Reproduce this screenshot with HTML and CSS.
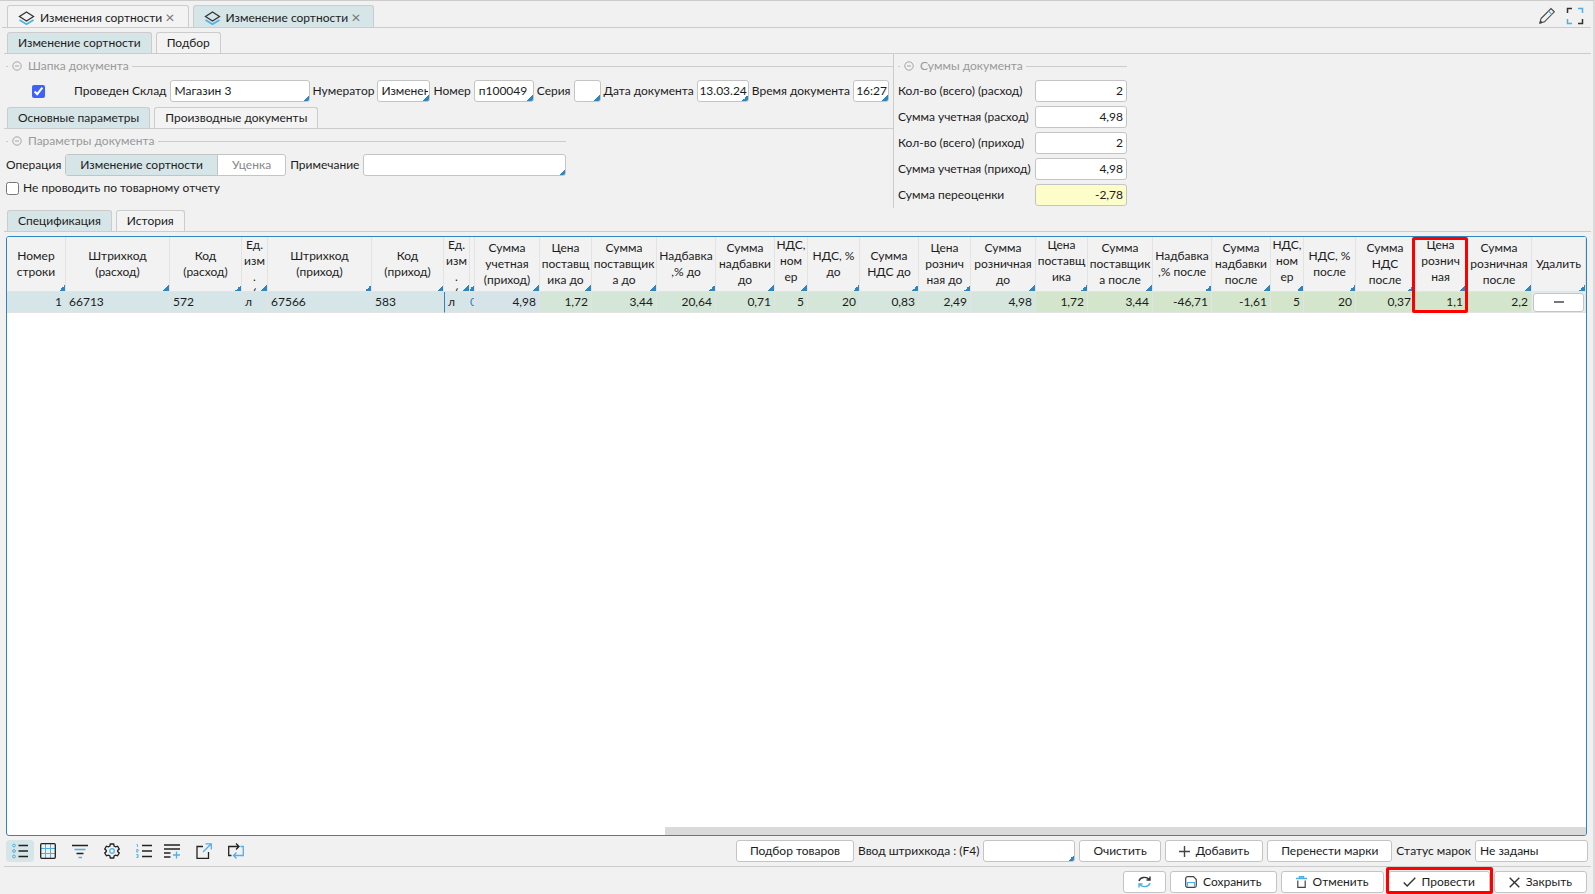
FILE: index.html
```html
<!DOCTYPE html>
<html lang="ru">
<head>
<meta charset="utf-8">
<title>Изменение сортности</title>
<link rel="stylesheet" href="styles.css">
</head>
<body>
<svg class="defs" aria-hidden="true">
  <symbol id="layers" viewBox="0 0 16 14"><path d="M8 1 15 5.500 8 10 1 5.500Z" fill="none" stroke="#333" stroke-width="1.300"/><path d="M1 9l7 4.300L15 9" fill="none" stroke="#4fb0e6" stroke-width="1.600"/></symbol>
  <symbol id="fold" viewBox="0 0 10 10"><circle cx="5" cy="5" r="4.200" fill="none" stroke="#a5a5a5"/><path d="M3 5h4" stroke="#a5a5a5"/></symbol>
</svg>
<div class="app">
  <header class="topbar">
    <div class="tabs" role="tablist">
      <div class="tab doc"><svg><use href="#layers"/></svg><button class="plain" role="tab">Изменения сортности</button><button class="close" aria-label="Закрыть вкладку">×</button></div>
      <div class="tab doc active"><svg><use href="#layers"/></svg><button class="plain" role="tab" aria-selected="true">Изменение сортности</button><button class="close" aria-label="Закрыть вкладку">×</button></div>
    </div>
    <div class="window-tools">
      <button class="icon" aria-label="Редактировать"><svg width="18" height="18" viewBox="0 0 18 18" fill="none" stroke="#444" stroke-width="1.100"><path d="M2 16l1-4.500L13 1.500l3.300 3.300L6.500 14.800Z"/><path d="M10.500 4l3.300 3.300" stroke="#4fb0e6"/><path d="M2 16l.5-2 1.500 1.500Z" fill="#333"/></svg></button>
      <button class="icon" aria-label="Во весь экран"><svg width="18" height="18" viewBox="0 0 18 18" fill="none" stroke="#333" stroke-width="1.500"><path d="M1.500 6V1.500H6M16.500 12v4.500H12"/><path d="M12 1.500h4.500V6M6 16.500H1.500V12" stroke="#4fb0e6"/></svg></button>
    </div>
  </header>

  <main class="form">
    <nav class="tabs sub" role="tablist">
      <button class="tab active" role="tab" aria-selected="true">Изменение сортности</button>
      <button class="tab" role="tab">Подбор</button>
    </nav>

    <div class="panels">
      <div class="left">
        <section class="group">
          <h2><svg><use href="#fold"/></svg>Шапка документа</h2>
          <div class="header-fields">
            <input type="checkbox" id="posted" checked><label for="posted">Проведен</label>
            <label for="store">Склад</label><input class="pick" id="store" value="Магазин 3">
            <label for="numr">Нумератор</label><input class="pick tight" id="numr" value="Изменение сортности">
            <label for="num">Номер</label><input class="pick" id="num" value="п100049">
            <label for="ser">Серия</label><input class="pick" id="ser">
            <label for="date">Дата документа</label><input class="pick date" id="date" value="13.03.24">
            <label for="time">Время документа</label><input class="pick date" id="time" value="16:27">
          </div>
        </section>
        <nav class="tabs inner" role="tablist">
          <button class="tab active" role="tab" aria-selected="true">Основные параметры</button>
          <button class="tab" role="tab">Производные документы</button>
        </nav>
        <section class="group params">
          <h2><svg><use href="#fold"/></svg>Параметры документа</h2>
          <div class="line">
            <span>Операция</span>
            <div class="toggle"><button class="on" aria-pressed="true">Изменение сортности</button><button>Уценка</button></div>
            <label for="note">Примечание</label><input class="pick note" id="note">
          </div>
          <div class="line check"><input type="checkbox" id="skip"><label for="skip">Не проводить по товарному отчету</label></div>
        </section>
      </div>
      <section class="group sums">
        <h2><svg><use href="#fold"/></svg>Суммы документа</h2>
        <div class="sum-grid">
          <label for="s1">Кол-во (всего) (расход)</label><input id="s1" value="2">
          <label for="s2">Сумма учетная (расход)</label><input id="s2" value="4,98">
          <label for="s3">Кол-во (всего) (приход)</label><input id="s3" value="2">
          <label for="s4">Сумма учетная (приход)</label><input id="s4" value="4,98">
          <label for="s5">Сумма переоценки</label><input id="s5" class="warn" value="-2,78">
        </div>
      </section>
    </div>

    <nav class="tabs spec" role="tablist">
      <button class="tab active" role="tab" aria-selected="true">Спецификация</button>
      <button class="tab" role="tab">История</button>
    </nav>

    <div class="grid">
      <table>
        <colgroup><col class="w59"><col class="w104"><col class="w72"><col class="w26"><col class="w104"><col class="w72"><col class="w26"><col class="w5"><col class="w65"><col class="w52"><col class="w65"><col class="w59"><col class="w59"><col class="w33"><col class="w52"><col class="w59"><col class="w52"><col class="w65"><col class="w52"><col class="w65"><col class="w59"><col class="w59"><col class="w33"><col class="w52"><col class="w59"><col class="w52"><col class="w65"><col></colgroup>
        <thead><tr>
          <th><div>Номер<br>строки</div></th>
          <th><div>Штрихкод<br>(расход)</div></th>
          <th><div>Код<br>(расход)</div></th>
          <th class="top"><div>Ед.<br>изм<br>.<br>(</div></th>
          <th><div>Штрихкод<br>(приход)</div></th>
          <th><div>Код<br>(приход)</div></th>
          <th class="top"><div>Ед.<br>изм<br>.<br>(</div></th>
          <th></th>
          <th><div>Сумма<br>учетная<br>(приход)</div></th>
          <th><div>Цена<br>поставщ<br>ика до</div></th>
          <th><div>Сумма<br>поставщик<br>а до</div></th>
          <th><div>Надбавка<br>,% до</div></th>
          <th><div>Сумма<br>надбавки<br>до</div></th>
          <th class="top"><div>НДС,<br>ном<br>ер</div></th>
          <th><div>НДС, %<br>до</div></th>
          <th><div>Сумма<br>НДС до</div></th>
          <th><div>Цена<br>рознич<br>ная до</div></th>
          <th><div>Сумма<br>розничная<br>до</div></th>
          <th class="top"><div>Цена<br>поставщ<br>ика</div></th>
          <th><div>Сумма<br>поставщик<br>а после</div></th>
          <th><div>Надбавка<br>,% после</div></th>
          <th><div>Сумма<br>надбавки<br>после</div></th>
          <th class="top"><div>НДС,<br>ном<br>ер</div></th>
          <th><div>НДС, %<br>после</div></th>
          <th><div>Сумма<br>НДС<br>после</div></th>
          <th class="top marked"><div>Цена<br>рознич<br>ная</div></th>
          <th><div>Сумма<br>розничная<br>после</div></th>
          <th><div>Удалить</div></th>
        </tr></thead>
        <tbody><tr>
          <td class="num">1</td><td>66713</td><td>572</td><td>л</td><td>67566</td><td>583</td><td class="current">л</td><td class="sliver">0</td>
          <td class="num sky">4,98</td>
          <td class="num before">1,72</td><td class="num before">3,44</td><td class="num before">20,64</td><td class="num before">0,71</td><td class="num before">5</td><td class="num before">20</td>
          <td class="num retail">0,83</td><td class="num retail">2,49</td><td class="num retail">4,98</td>
          <td class="num after">1,72</td><td class="num after">3,44</td><td class="num after">-46,71</td><td class="num after">-1,61</td><td class="num after">5</td><td class="num after">20</td><td class="num after">0,37</td><td class="num after">1,1</td><td class="num after">2,2</td>
          <td class="del"><button aria-label="Удалить строку"><svg width="10" height="2"><path d="M0 1h10" stroke="#777" stroke-width="2"/></svg></button></td>
        </tr></tbody>
      </table>
      <div class="scroll"></div>
    </div>

    <div class="toolbar">
      <div class="tools">
        <button class="icon active" aria-label="Список"><svg viewBox="0 0 16 16"><g stroke="#4fb0e6"><circle cx="2" cy="2.500" r="1.400"/><circle cx="2" cy="8" r="1.400"/><circle cx="2" cy="13.500" r="1.400"/></g><path d="M6.500 2.500H16M6.500 8H16M6.500 13.500H16" stroke-width="1.500"/></svg></button>
        <button class="icon" aria-label="Таблица"><svg viewBox="0 0 16 16"><path d="M5.500 1v14M10.500 1v14M1 5.500h14M1 10.500h14" stroke="#4fb0e6"/><rect x=".7" y=".7" width="14.600" height="14.600" rx="1" stroke-width="1.300"/></svg></button>
        <button class="icon gap" aria-label="Фильтр"><svg viewBox="0 0 16 16"><path d="M0 2.500h16M4.500 10.500h7" stroke-width="1.400"/><path d="M2.500 6.500h11M6.500 14.500h3.500" stroke="#4fb0e6" stroke-width="1.400"/></svg></button>
        <button class="icon gap" aria-label="Настройки"><svg viewBox="0 0 16 16"><path d="M6.300 1h3.400l.4 2 1.500.9 2-.7 1.700 2.900-1.600 1.300v1.200l1.600 1.300-1.700 2.900-2-.7-1.500.9-.4 2H6.300l-.4-2-1.500-.9-2 .7L.7 9.900l1.600-1.300V7.400L.7 6.100l1.700-2.900 2 .7L5.900 3Z" stroke-width="1.300"/><circle cx="8" cy="8" r="2.300" stroke="#4fb0e6" stroke-width="1.300"/></svg></button>
        <button class="icon gap" aria-label="Нумерация"><svg viewBox="0 0 16 16"><path d="M.5 1.500h1V4M.3 6.500h1.800v1.300H.5v1.200h1.800M.3 11.500h1.800v3H.3M.8 13h1.300" stroke="#4fb0e6" stroke-width=".9"/><path d="M6 2.500h10M6 8h10M6 13.500h10" stroke-width="1.400"/></svg></button>
        <button class="icon" aria-label="Добавить строки"><svg viewBox="0 0 16 16"><path d="M0 2h16M0 6h16M0 10h6.500M0 14h6.500" stroke-width="1.400"/><path d="M9 12h7M12.500 8.500v7" stroke="#4fb0e6" stroke-width="1.300"/></svg></button>
        <button class="icon gap" aria-label="Открыть"><svg viewBox="0 0 16 16"><path d="M7 3.500H1V15.300h11.500V9" stroke-width="1.300"/><path d="M7 9l8-8M9.500.8H15.300V6.500" stroke="#4fb0e6" stroke-width="1.300"/></svg></button>
        <button class="icon gap" aria-label="Обменять"><svg viewBox="0 0 16 16"><path d="M3.500 12.500H.7V3.500h10M8 .5l3 3-3 3" stroke-width="1.300"/><path d="M12.500 3.500h2.800v9H6M8.500 9.500l-3 3 3 3" stroke="#4fb0e6" stroke-width="1.300"/></svg></button>
      </div>
      <div class="actions">
        <button class="btn">Подбор товаров</button>
        <label for="bar">Ввод штрихкода : (F4)</label><input class="pick bar" id="bar">
        <button class="btn">Очистить</button>
        <button class="btn"><svg width="11" height="11" viewBox="0 0 11 11"><path d="M0 5.500h11M5.500 0v11" stroke="#444" stroke-width="1.400"/></svg>Добавить</button>
        <button class="btn">Перенести марки</button>
        <label for="mark">Статус марок</label><input class="mark" id="mark" value="Не заданы">
      </div>
    </div>

    <footer class="footer">
      <button class="btn" aria-label="Обновить"><svg width="13" height="12" viewBox="0 0 13 12" fill="none" stroke-width="1.400"><path d="M1 5C2 1 8 0 11.500 3.500M12 .5v3.500H8.500" stroke="#333"/><path d="M12 7c-1 4-7 5-10.500 1.500M1 11.500V8h3.500" stroke="#4fb0e6"/></svg></button>
      <button class="btn"><svg width="12" height="12" viewBox="0 0 12 12" fill="none" stroke="#444" stroke-width="1.200"><path d="M3 .7H8.500l2.800 2.800V9.500q0 1.800-1.800 1.800h-7Q.7 11.300.7 9.500v-7Q.7.700 3 .7Z"/><path d="M2.500 11V6.500h7V11" stroke="#4fb0e6"/></svg>Сохранить</button>
      <button class="btn"><svg width="11" height="12" viewBox="0 0 11 12" fill="none" stroke-width="1.200"><path d="M0 2.500h11M3.500 2.300V.7h4v1.600" stroke="#4fb0e6" stroke-width="1.400"/><path d="M1.800 4.500v6.800h7.400V4.500" stroke="#444"/></svg>Отменить</button>
      <button class="btn marked"><svg width="13" height="10" viewBox="0 0 13 10" fill="none" stroke="#333" stroke-width="1.400"><path d="M.7 5.500 4.200 9 12.300.8"/></svg>Провести</button>
      <button class="btn"><svg width="11" height="11" viewBox="0 0 11 11" stroke="#333" stroke-width="1.400"><path d="M.7.7l9.600 9.600M10.300.7.700 10.300"/></svg>Закрыть</button>
    </footer>
  </main>
</div>
</body>
</html>
```
FILE: styles.css
```css
*, *::before, *::after { box-sizing: border-box; }
body { margin: 0; background: #f1f1f1; color: #1c1c1c; font: 12px/16px Lato, "Noto Sans", sans-serif; }
button, input { font: inherit; color: inherit; margin: 0; }
button { white-space: nowrap; }
label, span { white-space: nowrap; }
.defs { display: none; }
.app { height: 100vh; overflow: hidden; display: flex; flex-direction: column; border-top: 1px solid #ccc; border-right: 2px solid #dadada; }

.topbar { display: flex; justify-content: space-between; margin: 0 2px; padding: 4px 7px 0 5px; border-bottom: 1px solid #ccc; }
.window-tools { display: flex; gap: 10px; align-items: center; }
.icon { display: flex; align-items: center; justify-content: center; padding: 0; border: 0; background: none; border-radius: 4px; }

.tabs { display: flex; gap: 4px; }
.tab { display: flex; align-items: center; height: 21px; padding: 0 10px; border: 1px solid #ccc; border-bottom: 0; border-radius: 3px 3px 0 0; background: #f3f3f3; }
.tab.active { background: #d6e5e8; }
.tab.doc { height: 22px; padding: 2px 13px 0 10px; }
.tab svg { width: 17px; height: 14px; margin-right: 5px; }
.plain, .close { padding: 0; border: 0; background: none; }
.close { margin-left: 3px; padding-bottom: 2px; color: #777; font-size: 16px; line-height: 14px; }

.form { flex: 1; min-height: 0; display: flex; flex-direction: column; padding: 4px 2px 0 4px; }
.sub, .inner, .spec { padding-left: 3px; border-bottom: 1px solid #ccc; }

.panels { display: flex; }
.left { width: 890px; border-right: 1px solid #ccc; padding-left: 2px; }
.group { padding-top: 4px; }
.group h2 { display: flex; align-items: center; margin: 0; height: 16px; font-size: 12px; font-weight: 400; color: #999; }
.group h2::before { content: ""; width: 2px; height: 1px; margin-right: 4px; background: #ccc; }
.group h2::after { content: ""; flex: 1; height: 1px; margin-left: 3px; background: #ccc; }
.group h2 svg { width: 10px; height: 10px; margin-right: 6px; }

input { height: 22px; min-width: 0; padding: 0 4px 1px; border: 1px solid #c4c4c4; border-radius: 3px; background: #fff; }
.pick { background: linear-gradient(135deg, transparent 50%, #2e86c0 50%) no-repeat right bottom / 6px 6px #fff; }
input[type="checkbox"] { width: 13px; height: 13px; accent-color: #3b63fb; }

.header-fields { display: grid; grid-template-columns: 65px auto auto 1fr auto 53px auto 60px auto 27px auto 52px auto 36px; gap: 3px; align-items: center; height: 34px; padding-right: 4px; }
.header-fields input[type="checkbox"] { justify-self: center; }
.date { padding: 0 1px 1px; text-align: right; }
.tight { padding: 0 1px 1px 3px; }
.inner { margin-left: -2px; margin-top: -2px; padding-top: 1px; }
.params { width: 560px; }
.line { display: flex; align-items: center; gap: 4px; margin-top: 5px; }
.check { margin-top: 4px; }
.note { flex: 1; }
.toggle { display: flex; border: 1px solid #c4c4c4; border-radius: 3px; background: #fff; overflow: hidden; }
.toggle button { height: 20px; padding: 0 14px; border: 0; background: none; color: #888; }
.toggle .on { background: #d6e5e8; color: inherit; border-right: 1px solid #c4c4c4; }

.sums { width: 233px; padding-left: 4px; }
.sum-grid { display: grid; grid-template-columns: 1fr 92px; gap: 4px; align-items: center; padding: 6px 0 2px; }
.sum-grid input { text-align: right; padding: 0 3px 1px; }
.sum-grid .warn { background: #fdfdca; }
.spec { padding-top: 2px; }

.grid { position: relative; flex: 1; min-height: 0; margin: 4px 4px 0 2px; border: 1px solid #2e86c0; border-radius: 3px; background: #fff; overflow: hidden; }
table { width: 100%; table-layout: fixed; border-collapse: separate; border-spacing: 0; }
.w5 { width: 5px; } .w26 { width: 26px; } .w33 { width: 33px; } .w52 { width: 52px; } .w59 { width: 59px; } .w65 { width: 65px; } .w72 { width: 72px; } .w104 { width: 104px; }
th, td { padding: 0; border-right: 1px solid #e3e3e3; border-bottom: 1px solid #e3e3e3; white-space: nowrap; }
th { position: relative; height: 55px; font-weight: 400; background: linear-gradient(135deg, transparent 50%, #2e86c0 50%) no-repeat right bottom / 6px 6px #f2f2f2; }
th div { max-height: 54px; overflow: hidden; margin: 0 -2px; }
th.top { vertical-align: top; }
td { height: 21px; padding-left: 3px; background: #d6e5e8; overflow: hidden; }
.num { padding: 0 3px 0 0; text-align: right; }
.sky { background: #d6e4ea; }
.before { background: #d4e6d8; }
.retail { background: #d4e6dd; }
.after { background: #d3e6cc; }
.current { border-left: 1px solid #2e86c0; }
.sliver { padding: 0; color: #2e86c0; }
.del { padding: 0 1px; background: #e3edef; }
.del button { display: flex; align-items: center; justify-content: center; width: 100%; height: 19px; border: 1px solid #c4c4c4; border-radius: 3px; background: #fff; }
th.marked { z-index: 1; }
th.marked::after { content: ""; position: absolute; left: -3px; right: -2px; top: 0; height: 76px; border: 3px solid #f00; border-radius: 2px; }
.scroll { position: absolute; right: 0; bottom: 0; width: 58.300%; height: 8px; background: #dadada; }

.toolbar { display: flex; justify-content: space-between; align-items: center; height: 31px; padding: 0 3px 0 2px; border-bottom: 1px solid #ccc; }
.tools, .actions, .footer { display: flex; align-items: center; }
.tools .icon { width: 28px; height: 22px; }
.tools .gap { margin-left: 4px; }
.tools .active { background: #d6e5e8; }
.tools svg { width: 16px; height: 16px; fill: none; stroke: #222; }
.actions, .footer { gap: 4px; }
.btn { display: flex; align-items: center; justify-content: center; gap: 6px; height: 22px; padding: 0 13px; border: 1px solid #c4c4c4; border-radius: 3px; background: #fff; }
.bar { width: 92px; }
.mark { width: 113px; }
.footer { justify-content: flex-end; padding: 4px 4px 1px 0; }
.footer .btn { padding: 0 14px; }
.btn.marked { position: relative; }
.btn.marked::after { content: ""; position: absolute; left: -3px; top: -5px; right: -4px; bottom: -2px; border: 3px solid #f00; border-radius: 2px; }
```
